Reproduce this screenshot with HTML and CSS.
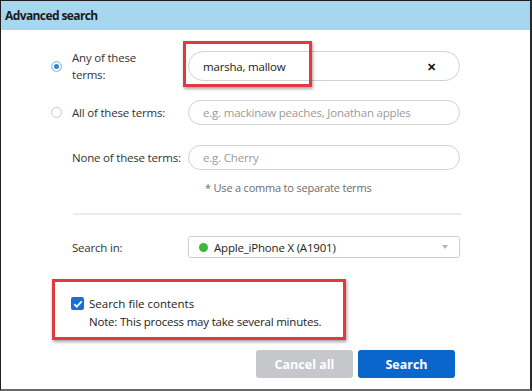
FILE: index.html
```html
<!DOCTYPE html>
<html lang="en">
<head>
    <meta charset="UTF-8">
    <title>Advanced search</title>
    <link rel="stylesheet" href="styles.css">
</head>
<body>
    <div class="dialog">
        <div class="titlebar">Advanced search</div>

        <div class="form">
            <div class="row row-first">
                <span class="radio checked"></span>
                <label class="label">Any of these<br>terms:</label>
                <div class="field field-big">
                    <span class="value">marsha, mallow</span>
                    <span class="clear">&#x2715;</span>
                    <span class="mark mark-input"></span>
                </div>
            </div>

            <div class="row">
                <span class="radio"></span>
                <label class="label">All of these terms:</label>
                <div class="field"><span class="placeholder">e.g. mackinaw peaches, Jonathan apples</span></div>
            </div>

            <div class="row">
                <span></span>
                <label class="label">None of these terms:</label>
                <div class="field"><span class="placeholder">e.g. Cherry</span></div>
            </div>

            <div class="hint">* Use a comma to separate terms</div>

            <div class="divider"></div>

            <div class="row row-select">
                <span></span>
                <label class="label">Search in:</label>
                <div class="select">
                    <span class="dot"></span>
                    <span class="value">Apple_iPhone X (A1901)</span>
                    <span class="caret"></span>
                </div>
            </div>
        </div>

        <div class="contents">
            <div class="check-line">
                <span class="checkbox">
                    <svg width="12" height="12" viewBox="0 0 12 12"><path d="M2.3 6.2l2.4 2.4 5-5.2" fill="none" stroke="#fff" stroke-width="1.8"/></svg>
                </span>
                <span>Search file contents</span>
            </div>
            <div class="note">Note: This process may take several minutes.</div>
        </div>

        <div class="actions">
            <button class="btn btn-cancel">Cancel all</button>
            <button class="btn btn-search">Search</button>
        </div>
    </div>
</body>
</html>
```

FILE: styles.css
```css
body {
    margin: 0;
    font-family: 'Open Sans', 'Noto Sans', sans-serif;
    font-size: 11.5px;
    color: #333;
    background: #fff;
}

.dialog {
    width: 532px;
    height: 391px;
    box-sizing: border-box;
    border: 1px solid #1e1e1e;
    border-bottom: 2px solid #6a6a6a;
    border-right: 2px solid #2a2a2a;
    position: relative;
    overflow: hidden;
}

.titlebar {
    height: 29px;
    line-height: 29px;
    background: #a7d6ef;
    padding-left: 4px;
    font-weight: 700;
    font-size: 12px;
    color: #1a1a1a;
    letter-spacing: -0.6px;
}

.form {
    padding: 19px 0 0 48px;
}

.row {
    display: grid;
    grid-template-columns: 23px 116px 272px;
    align-items: center;
    margin-bottom: 20px;
}

.row-first {
    margin-bottom: 17px;
}

.label {
    line-height: 17px;
    color: #333;
    letter-spacing: -0.2px;
}

.radio {
    width: 9px;
    height: 9px;
    border: 1px solid #c8c8c8;
    border-radius: 50%;
    margin-left: 2px;
    box-sizing: content-box;
}

.radio.checked {
    border-color: #9ccdf2;
    background: #2b86d9;
    box-shadow: inset 0 0 0 2px #fff;
}

.field {
    height: 25px;
    border: 1px solid #d2d2d2;
    border-radius: 13px;
    box-sizing: border-box;
    display: flex;
    align-items: center;
    padding: 0 14px;
    position: relative;
}

.field-big {
    height: 30px;
    border-radius: 15px;
}

.value {
    color: #222;
    letter-spacing: -0.2px;
}

.placeholder {
    color: #9a9a9a;
    letter-spacing: -0.2px;
}

.clear {
    margin-left: auto;
    margin-right: 9px;
    font-weight: 700;
    font-size: 11px;
    color: #111;
}

.mark {
    position: absolute;
    border: 3px solid #e2383f;
    box-shadow: 1px 2px 3px rgba(0, 0, 0, 0.35);
}

.mark-input {
    left: -6px;
    top: -11px;
    width: 123px;
    height: 40px;
}

.hint {
    margin: -10px 0 0 156px;
    color: #6d6d6d;
    font-size: 11px;
    letter-spacing: -0.2px;
}

.divider {
    width: 388px;
    height: 2px;
    background: #ececec;
    margin: 18px 0 0 24px;
}

.row-select {
    margin-top: 21px;
    margin-bottom: 0;
}

.select {
    height: 22px;
    border: 1px solid #cfcfcf;
    border-radius: 3px;
    box-sizing: border-box;
    display: flex;
    align-items: center;
    padding: 0 10px;
}

.dot {
    width: 9px;
    height: 9px;
    border-radius: 50%;
    background: #3cb93c;
    margin-right: 6px;
}

.caret {
    margin-left: auto;
    margin-right: 1px;
    width: 0;
    height: 0;
    border-left: 3px solid transparent;
    border-right: 3px solid transparent;
    border-top: 4px solid #b5b5b5;
}

.contents {
    margin: 21px 0 0 51px;
    width: 294px;
    height: 61px;
    border: 3px solid #e2383f;
    box-shadow: 1px 2px 3px rgba(0, 0, 0, 0.35);
    padding: 14px 0 0 16px;
    box-sizing: border-box;
}

.check-line {
    display: flex;
    align-items: center;
    gap: 5px;
    color: #222;
}

.checkbox {
    width: 13px;
    height: 13px;
    border-radius: 2px;
    background: #1c6fd0;
    display: flex;
    align-items: center;
    justify-content: center;
}

.note {
    margin: 3px 0 0 18px;
    color: #222;
    letter-spacing: -0.2px;
}

.actions {
    display: flex;
    justify-content: flex-end;
    gap: 5px;
    margin: 10px 75px 0 0;
}

.btn {
    width: 97px;
    height: 28px;
    border: none;
    border-radius: 3px;
    color: #fff;
    font-family: 'Open Sans', 'Noto Sans', sans-serif;
    font-weight: 700;
    font-size: 12.5px;
}

.btn-cancel {
    background: #c5c7ca;
}

.btn-search {
    background: #0b66cb;
}
```
